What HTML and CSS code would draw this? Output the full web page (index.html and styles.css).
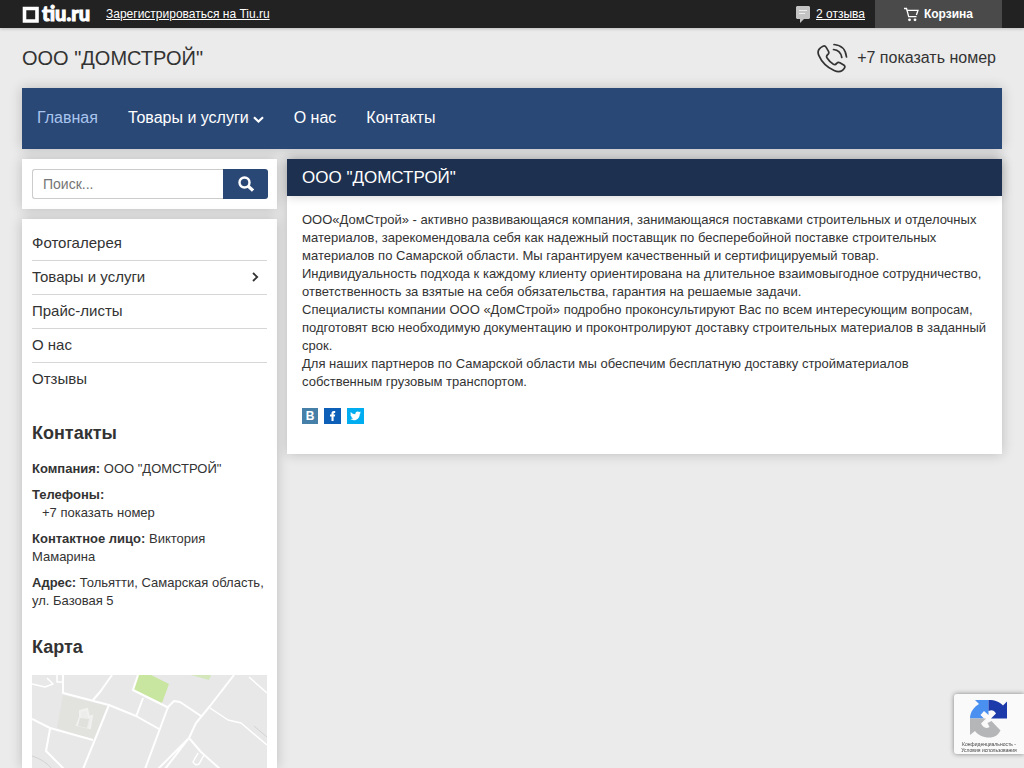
FILE: index.html
```html
<!DOCTYPE html>
<html lang="ru">
<head>
<meta charset="utf-8">
<title>ООО "ДОМСТРОЙ"</title>
<link rel="stylesheet" href="styles.css">
</head>
<body>
<div class="topbar">
  <a class="logo" href="#">
    <svg class="logo-mark" viewBox="0 0 17 17" aria-hidden="true"><path d="M2.500 2.500h12.500v12.500H2.500z" fill="none" stroke="#fff" stroke-width="3.600"/></svg>
    <span>tiu.ru</span>
  </a>
  <a class="register" href="#">Зарегистрироваться на Tiu.ru</a>
  <a class="reviews" href="#">
    <svg class="bubble" viewBox="0 0 14 17" aria-hidden="true"><path d="M1 0h12l1 1v11l-1 1H8l-4 4v-4H1l-1-1V1z" fill="#c4c4c4"/><path d="M3 4.500h8M3 7.500h6" stroke="#eee"/></svg>
    <span>2 отзыва</span>
  </a>
  <a class="cart" href="#">
    <svg class="cart-icon" viewBox="0 0 15 15" aria-hidden="true"><path d="M0 1.500h2.500l2.200 8.200h7.800M3 3.300h11l-1.600 4.700" fill="none" stroke="#fff" stroke-width="1.300"/><circle cx="5.500" cy="12.800" r="1.400" fill="#fff"/><circle cx="11" cy="12.800" r="1.400" fill="#fff"/></svg>
    <span>Корзина</span>
  </a>
</div>
<div class="page">
  <header class="header">
    <a class="company" href="#">ООО "ДОМСТРОЙ"</a>
    <a class="phone" href="#">
      <svg class="phone-icon" viewBox="0 0 32 31" fill="none" stroke="#333" stroke-width="1.700" stroke-linecap="round" stroke-linejoin="round" aria-hidden="true"><path d="M7 3.200c1.500-.6 2.500 0 3.200 1.200l2.300 4c.7 1.300.3 2.300-.7 3.100-1.600 1.200-1.700 2-.7 3.500 1.700 2.700 3.700 4.700 6.300 6.200 1.500.8 2.200.6 3.300-.8.900-1.100 2-1.300 3.200-.6l3.800 2.300c1.300.8 1.500 1.800.8 2.900-2.400 3.800-6 4.600-10.400 2.500C10.800 24.100 5.600 18.800 2.800 12.300 1 8.200 3.200 5 7 3.200z"/><path d="M18 1.500c7 .5 11.600 5 12.500 12.500M17.500 6.500c4.500.5 7.500 3.300 8.300 8"/></svg>
      <span>+7 показать номер</span>
    </a>
  </header>
  <nav class="nav">
    <a class="nav-active" href="#">Главная</a>
    <a href="#">Товары и услуги<svg class="chevron-down" viewBox="0 0 11 7" aria-hidden="true"><path d="M1 1.200l4.500 4.300L10 1.200" fill="none" stroke="#fff" stroke-width="2.200"/></svg></a>
    <a href="#">О нас</a>
    <a href="#">Контакты</a>
  </nav>
  <div class="columns">
    <div class="side">
      <form class="panel search">
        <input type="text" placeholder="Поиск..." aria-label="Поиск">
        <button type="button" aria-label="Найти"><svg viewBox="0 0 16 16" aria-hidden="true"><circle cx="6.500" cy="6.500" r="5" fill="none" stroke="#fff" stroke-width="2.400"/><path d="M10 10l5 4.500" stroke="#fff" stroke-width="3.200"/></svg></button>
      </form>
      <aside class="panel sidebar">
        <ul class="menu">
          <li><a href="#">Фотогалерея</a></li>
          <li><a href="#">Товары и услуги<svg class="chevron-right" viewBox="0 0 7 10" aria-hidden="true"><path d="M1 1l4.200 4L1 9" fill="none" stroke="#333" stroke-width="1.800"/></svg></a></li>
          <li><a href="#">Прайс-листы</a></li>
          <li><a href="#">О нас</a></li>
          <li><a href="#">Отзывы</a></li>
        </ul>
        <h2>Контакты</h2>
        <div class="contacts">
          <p><b>Компания:</b> ООО "ДОМСТРОЙ"</p>
          <p><b>Телефоны:</b> <a class="tel" href="#">+7 показать номер</a></p>
          <p><b>Контактное лицо:</b> Виктория Мамарина</p>
          <p><b>Адрес:</b> Тольятти, Самарская область, ул. Базовая 5</p>
        </div>
        <h2>Карта</h2>
        <div class="map">
          <svg viewBox="0 0 235 93" preserveAspectRatio="xMinYMin slice" role="img" aria-label="Карта">
            <path d="M0 0h235v94H0z" fill="#e8e8e8"/>
            <path d="M31 20l44 11-14 35-36-13z" fill="#e2e3df"/>
            <path d="M106 0h13l18 9-7 19-29-13z" fill="#c9e6a1"/>
            <path d="M159 0h20l-2 5z" fill="#d3e7ba"/>
            <g fill="none" stroke="#fff" stroke-width="2" stroke-linejoin="round">
              <path d="M31 0v18l46 12 27 11 23 13M80 0L68 17l-7 8M77 30L51 94M0 44l18 9 43 12M18 54l-4 22 18 18M111 23l-7 19"/>
              <path d="M106 0l-5 15 36 18M202 0l-24 31-14 17-7 15M113 94l23-62 6-6 6 1 21 14M157 63l-31 31M157 63l-24 31M157 63l12 14 19 17"/>
              <path d="M0 9l13 3 8-3-6-6M25 0v7h7M178 33l18 12 13 3 26 22M217 2l18 16" stroke-width="1.500"/>
              <path d="M166 78l-5 9q2 4 6 2l5-9" stroke-width="1.500"/>
            </g>
            <path d="M48 36l7-2 2 8 3-1-2 12-13-3 3-8z" fill="#edeeeb" stroke="#f1f1ef" stroke-width="2"/>
            <path d="M48 43l9 1-2 9-9-2z" fill="#e0e1dd"/>
            <path d="M0 81q13 4 20 13M222 51l13 11" fill="none" stroke="#d2d2d2"/>
          </svg>
        </div>
      </aside>
    </div>
    <main class="panel content">
      <h1>ООО "ДОМСТРОЙ"</h1>
      <div class="article">
        <p>ООО«ДомСтрой» - активно развивающаяся компания, занимающаяся поставками строительных и отделочных материалов, зарекомендовала себя как надежный поставщик по бесперебойной поставке строительных материалов по Самарской области. Мы гарантируем качественный и сертифицируемый товар.</p>
        <p>Индивидуальность подхода к каждому клиенту ориентирована на длительное взаимовыгодное сотрудничество, ответственность за взятые на себя обязательства, гарантия на решаемые задачи.</p>
        <p>Специалисты компании ООО «ДомСтрой» подробно проконсультируют Вас по всем интересующим вопросам, подготовят всю необходимую документацию и проконтролируют доставку строительных материалов в заданный срок.</p>
        <p>Для наших партнеров по Самарской области мы обеспечим бесплатную доставку стройматериалов собственным грузовым транспортом.</p>
        <div class="social">
          <a class="vk" href="#">B</a>
          <a class="fb" href="#" aria-label="Facebook"><svg viewBox="0 0 16 16" aria-hidden="true"><path d="M7 13V8.500H5.500v-2H7V5.200C7 3.700 8 3 9.300 3h1.400v2H9.800c-.5 0-.7.200-.7.700v.8h1.600l-.3 2H9.100V13z" fill="#fff"/></svg></a>
          <a class="tw" href="#" aria-label="Twitter"><svg viewBox="0 0 16 16" aria-hidden="true"><path d="M3.300 4c1.200 1.400 2.700 2.200 4.600 2.300-.3-1.800.8-2.900 2.200-2.900.7 0 1.200.3 1.600.7l1.500-.5-.9 1.200 1.200-.2-1.200 1.300c0 3.700-2.500 6.300-5.900 6.300-1.400 0-2.700-.4-3.700-1.100 1.200.1 2.200-.2 3-.8-1-.1-1.700-.7-2-1.500h.9c-1-.3-1.700-1.100-1.700-2.200l.9.200C3 6.100 2.800 5 3.300 4z" fill="#fff"/></svg></a>
        </div>
      </div>
    </main>
  </div>
</div>
<div class="captcha">
  <svg viewBox="0 0 40 40" aria-hidden="true">
    <path d="M1 19.500h14l-3.500-3.500 3.500-4 4.500 4V1H6l4 4C5 8 1 13 1 19.500z" fill="#4a90f0"/>
    <path d="M19.500 1C26 1 31 3 34 6.500l4-4v17H22l5-5c-2-3-4-4-7.500-2.500z" fill="#1c3aa9"/>
    <path d="M1 19.500h16l-5 5c2 4 5 5.500 8.500 3.500l-2-4 4-2 9 9.500C29 36 26 38.500 20 38.500c-6 0-11-2.500-14-6.500l-5 4z" fill="#b5b6b8"/>
  </svg>
  <div class="captcha-links"><a href="#">Конфиденциальность</a> - <a href="#">Условия использования</a></div>
</div>
</body>
</html>
```
FILE: styles.css
```css
* { box-sizing: border-box; }
body {
  margin: 0;
  min-height: 100vh;
  display: flex;
  flex-direction: column;
  background: #ebebeb;
  color: #333;
  font: 13px/18px "Liberation Sans", Arial, sans-serif;
}
a { color: inherit; text-decoration: none; }
svg { display: block; flex: none; }
h1, h2, p, ul { margin: 0; padding: 0; }
.topbar {
  display: flex;
  align-items: center;
  height: 28px;
  padding: 0 22px;
  background: #222;
  color: #fff;
  font-size: 12px;
  box-shadow: 0 1px 3px rgba(0, 0, 0, .2);
}
.logo {
  display: flex;
  align-items: center;
  gap: 3px;
  width: 84px;
  font: 900 20px/26px Lato, sans-serif;
}
.logo span { -webkit-text-stroke: 1px #fff; padding-bottom: 2px; }
.logo-mark { width: 17px; height: 17px; }
.register, .reviews { text-decoration: underline; }
.reviews {
  display: flex;
  align-items: center;
  gap: 6px;
  margin-left: auto;
  margin-right: 10px;
}
.bubble { width: 14px; height: 17px; }
.cart {
  display: flex;
  align-items: center;
  justify-content: center;
  gap: 5px;
  width: 127px;
  height: 28px;
  background: #4a4a4a;
  font-weight: bold;
}
.cart-icon { width: 15px; height: 15px; }
.page {
  flex: 1;
  display: flex;
  flex-direction: column;
  padding: 0 22px;
}
.header {
  display: flex;
  align-items: center;
  justify-content: space-between;
  height: 60px;
  padding-right: 6px;
}
.company { font-size: 20px; line-height: 24px; }
.phone { display: flex; align-items: center; gap: 9px; font-size: 16px; }
.phone-icon { width: 32px; height: 31px; }
.nav {
  display: flex;
  align-items: center;
  gap: 30px;
  height: 61px;
  padding: 0 15px 2px;
  background: #2a4876;
  color: #fff;
  font-size: 16px;
  line-height: 20px;
  box-shadow: 0 0 12px rgba(0, 0, 0, .2);
}
.nav a { display: flex; align-items: center; gap: 4px; }
.nav .nav-active { color: #a9c5ee; }
.chevron-down { width: 11px; height: 7px; margin-top: 3px; }
.columns { flex: 1; display: flex; gap: 10px; padding-top: 10px; }
.side { width: 255px; flex: none; display: flex; flex-direction: column; gap: 10px; }
.panel { background: #fff; box-shadow: 0 0 12px rgba(0, 0, 0, .2); }
.search { display: flex; padding: 10px 9px 10px 10px; }
.search input {
  flex: 1;
  min-width: 0;
  height: 30px;
  padding: 0 10px;
  border: 1px solid #ccc;
  border-right: 0;
  border-radius: 3px 0 0 3px;
  font: 14px "Liberation Sans", Arial, sans-serif;
}
.search input::placeholder { color: #757575; }
.search button {
  display: flex;
  align-items: center;
  justify-content: center;
  width: 45px;
  height: 30px;
  padding: 0;
  border: 0;
  border-radius: 0 3px 3px 0;
  background: #2a4876;
}
.search button svg { width: 16px; height: 16px; }
.sidebar {
  flex: 1;
  display: flex;
  flex-direction: column;
  padding: 8px 10px 0;
}
.menu { list-style: none; font-size: 15px; }
.menu a {
  display: flex;
  align-items: center;
  justify-content: space-between;
  height: 33px;
  padding: 0 8px 2px 0;
}
.menu li + li { border-top: 1px solid #d6d6d6; }
.chevron-right { width: 7px; height: 10px; }
.sidebar h2 { margin-top: 26px; font-size: 18px; line-height: 22px; }
.contacts { padding-top: 16px; }
.contacts p { margin-bottom: 8px; }
.contacts .tel { display: block; padding-left: 10px; }
.contacts + h2 { margin-top: 18px; }
.map {
  flex: 1;
  min-height: 93px;
  height: 93px;
  margin-top: 17px;
  overflow: hidden;
}
.map svg { width: 100%; height: 100%; }
.content { flex: 1; min-width: 0; align-self: flex-start; }
.content h1 {
  padding: 9px 15px 8px;
  background: #1e304f;
  color: #fff;
  font-size: 17px;
  font-weight: normal;
  line-height: 20px;
  box-shadow: 0 0 10px rgba(0, 0, 0, .2);
}
.article { padding: 15px 15px 30px; }
.social { display: flex; gap: 6px; margin-top: 17px; }
.social a { width: 17px; height: 16px; }
.social svg { width: 17px; height: 16px; }
.social .vk {
  width: 16px;
  background: #4680a8;
  color: #fff;
  font-size: 12px;
  font-weight: bold;
  line-height: 16px;
  text-align: center;
}
.social .fb { background: #0d5fb8; }
.social .tw { background: #00adf0; }
.captcha {
  position: fixed;
  right: 0;
  bottom: 14px;
  width: 70px;
  height: 60px;
  padding-top: 5px;
  border-radius: 3px 0 0 3px;
  background: #fafafa;
  box-shadow: 0 0 5px #808080;
}
.captcha svg { width: 40px; height: 40px; margin: 0 auto; }
.captcha-links {
  padding-top: 2px;
  color: #444;
  font-size: 5px;
  line-height: 6px;
  text-align: center;
}
```
